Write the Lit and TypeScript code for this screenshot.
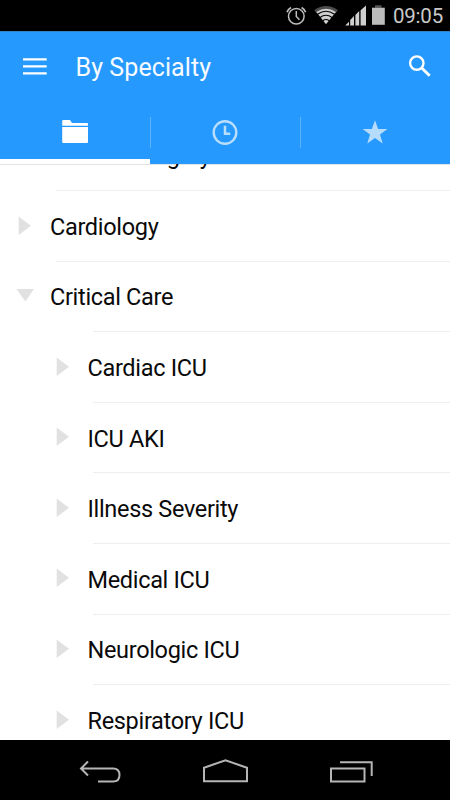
import { LitElement, html, css, svg } from "lit";
import { customElement, property } from "lit/decorators.js";
import { classMap } from "lit/directives/class-map.js";

interface Row {
  label: string;
  level: 1 | 2;
  open?: boolean;
}

const ROWS: Row[] = [
  { label: "Cardiac Surgery", level: 1 },
  { label: "Cardiology", level: 1 },
  { label: "Critical Care", level: 1, open: true },
  { label: "Cardiac ICU", level: 2 },
  { label: "ICU AKI", level: 2 },
  { label: "Illness Severity", level: 2 },
  { label: "Medical ICU", level: 2 },
  { label: "Neurologic ICU", level: 2 },
  { label: "Respiratory ICU", level: 2 },
];

@customElement("status-bar")
class StatusBar extends LitElement {
  static styles = css`
    :host { display: block; height: 31px; background: #000; }
    .bar { display: flex; height: 31px; justify-content: space-between; padding: 0 7px 0 284px; }
    .icons { display: block; width: 104px; height: 31px; flex: none; }
    .time { font-size: 20.5px; line-height: 33px; color: #c9c9c9; letter-spacing: -0.2px; }
  `;
  render() {
    return html`<div class="bar">
      <svg class="icons" viewBox="284 0 104 31">
        <g fill="none" stroke="#bdbdbd" stroke-width="1.5">
          <circle cx="296.3" cy="16.3" r="7.8" />
          <path d="M296.3 11v5.5l3.2 3.3" />
          <path d="M287 12.2q1.2-3 4-4.6M305.6 12.2q-1.2-3-4-4.6" stroke-width="1.7" />
        </g>
        <path d="M314.2 10.2Q326 1.8 338 10.2L335 13.5Q326 7.2 317.2 13.5Z" fill="#4c4c4c" />
        <path d="M316.3 12Q326 5.5 335.9 12L326 24.3Z" fill="#cfcfcf" />
        <path d="M317.5 14.3Q326 8.3 334.5 14.3M320 17.5Q326 13 332 17.5M322.8 20.8Q326 18.2 329.2 20.8" fill="none" stroke="#000" stroke-width="1.1" />
        <path d="M345.2 25.5h3.8v-3.7ZM350.2 25.5h3.8V16l-3.8 3.9ZM355.4 25.5h3.8V11l-3.8 3.9ZM360.6 25.5h5.4V5.5l-5.4 4.7Z" fill="#cfcfcf" />
        <path d="M375 5.3h6.5v2.4h-6.5z" fill="#555" />
        <path d="M372 7.7h12.8v17.1h-12.8z" fill="#bcbcbc" />
      </svg>
      <span class="time">09:05</span>
    </div>`;
  }
}

@customElement("app-header")
class AppHeader extends LitElement {
  static styles = css`
    :host { display: block; background: #2699fe; }
    .title-row { display: flex; align-items: center; height: 69px; padding: 0 18px 0 23px; box-shadow: inset 0 1px 0 #3582c5; }
    .menu { width: 24px; height: 24px; flex: none; }
    .title { flex: 1; margin-left: 28.5px; padding-top: 5px; font-size: 25px; line-height: 30px; letter-spacing: 0.08px; color: #f7fbff; }
    .search { width: 24px; height: 24px; flex: none; }
    .tabs { display: grid; grid-template-columns: repeat(3, 150px); height: 63.5px; }
    .tab { display: flex; box-sizing: border-box; position: relative; justify-content: center; padding-top: 18px; }
    .tab svg { width: 30px; height: 28px; }
    .tab.active { border-bottom: 5px solid #fff; }
    .tab + .tab::before { content: ""; position: absolute; left: 0; top: 17px; width: 1px; height: 31px; background: #5cb3fe; }
  `;
  render() {
    return html`
      <div class="title-row">
        <svg class="menu" viewBox="0 0 24 24"><path d="M0 4.2h23.7v2.2H0zM0 11.2h23.7v2.2H0zM0 18.2h23.7v2.2H0z" fill="#fff" /></svg>
        <span class="title">By Specialty</span>
        <svg class="search" viewBox="408 54 24 24"><circle cx="416.8" cy="63.1" r="6.7" fill="none" stroke="#fff" stroke-width="2.4" /><path d="M421.5 67.8l8.2 7.9" stroke="#fff" stroke-width="2.9" /></svg>
      </div>
      <div class="tabs">
        <div class="tab active">
          <svg viewBox="60 118 30 28"><path d="M62.2 125.7V121q0-1 1-1h6.8l2 2.9h15q1 0 1 1v1.8ZM62.2 127h25.8v15q0 1-1 1H63.2q-1 0-1-1Z" fill="#fff" /></svg>
        </div>
        <div class="tab">
          <svg viewBox="210 118 30 28" fill="none" stroke="#b9defd"><circle cx="225" cy="132.5" r="11.3" stroke-width="2.4" /><path d="M225 125.8v8h5.2" stroke-width="2.5" /></svg>
        </div>
        <div class="tab">
          <svg viewBox="360 118 30 28"><path d="M375 120.2l3.1 8.7h9.3l-7.4 5.5 2.7 9.2-7.7-5.5-7.7 5.5 2.7-9.2-7.4-5.5h9.3Z" fill="#b5dcfd" /></svg>
        </div>
      </div>`;
  }
}

@customElement("specialty-row")
class SpecialtyRow extends LitElement {
  @property({ attribute: false }) row!: Row;
  static styles = css`
    :host { display: block; }
    .row { display: flex; position: relative; box-sizing: border-box; height: 70.6px; padding-left: 16px; }
    .row.nested { padding-left: 53.5px; }
    .arrow { width: 18px; height: 20px; margin-top: 24.5px; flex: none; }
    .label { margin-left: 16px; padding-top: 20.9px; font-size: 23.5px; line-height: 30px; letter-spacing: -0.32px; color: #0a0a0a; white-space: nowrap; }
    .rule { position: absolute; left: 56px; right: 0; bottom: 0; height: 1px; background: #eee; }
    .nested .rule, .open .rule { left: 93px; }
  `;
  render() {
    const { label, level, open } = this.row;
    const shape = open ? svg`<path d="M0.5 3h17.5l-8.7 12.5Z" />` : svg`<path d="M2.7 0.5v18.5l12.3-9.2Z" />`;
    return html`<div class=${classMap({ row: true, nested: level === 2, open: !!open })}>
      <svg class="arrow" viewBox="0 0 18 20" fill="#e1e1e1">${shape}</svg>
      <span class="label">${label}</span>
      <div class="rule"></div>
    </div>`;
  }
}

@customElement("nav-bar")
class NavBar extends LitElement {
  static styles = css`
    :host { display: block; height: 60px; background: #000; }
    .bar { display: flex; justify-content: space-between; height: 60px; padding: 0 76px 0 77px; }
    .bar svg { width: 46px; height: 60px; fill: none; stroke: #b5b5b5; stroke-width: 2; }
  `;
  render() {
    return html`<div class="bar">
      <svg viewBox="77 740 46 60"><path d="M88 761.5l-7 7 7 7M81 768.5h32.2q6.3 0 6.3 6.5t-6.3 6.5H98" /></svg>
      <svg viewBox="203.5 740 46 60"><path d="M204.500 781.3V767.800l21.500-7.600 21.500 7.600v13.500Z" /></svg>
      <svg viewBox="328 740 46 60"><path d="M331 768.5h33.5v13H331ZM340 762.2h31.7V776" /></svg>
    </div>`;
  }
}

@customElement("app-root")
class AppRoot extends LitElement {
  static styles = css`
    :host { display: flex; flex-direction: column; width: 450px; height: 800px; overflow: hidden; background: #fff; font-family: Roboto, "Liberation Sans", sans-serif; }
    .list { flex: 1; min-height: 0; overflow: hidden; display: flex; flex-direction: column; justify-content: flex-start; box-shadow: inset 0 1px 0 #e4e4e4; }
    .scrolled { margin-top: -43.1px; }
  `;
  render() {
    return html`
      <status-bar></status-bar>
      <app-header></app-header>
      <main class="list"><div class="scrolled">${ROWS.map((r) => html`<specialty-row .row=${r}></specialty-row>`)}</div></main>
      <nav-bar></nav-bar>`;
  }
}
